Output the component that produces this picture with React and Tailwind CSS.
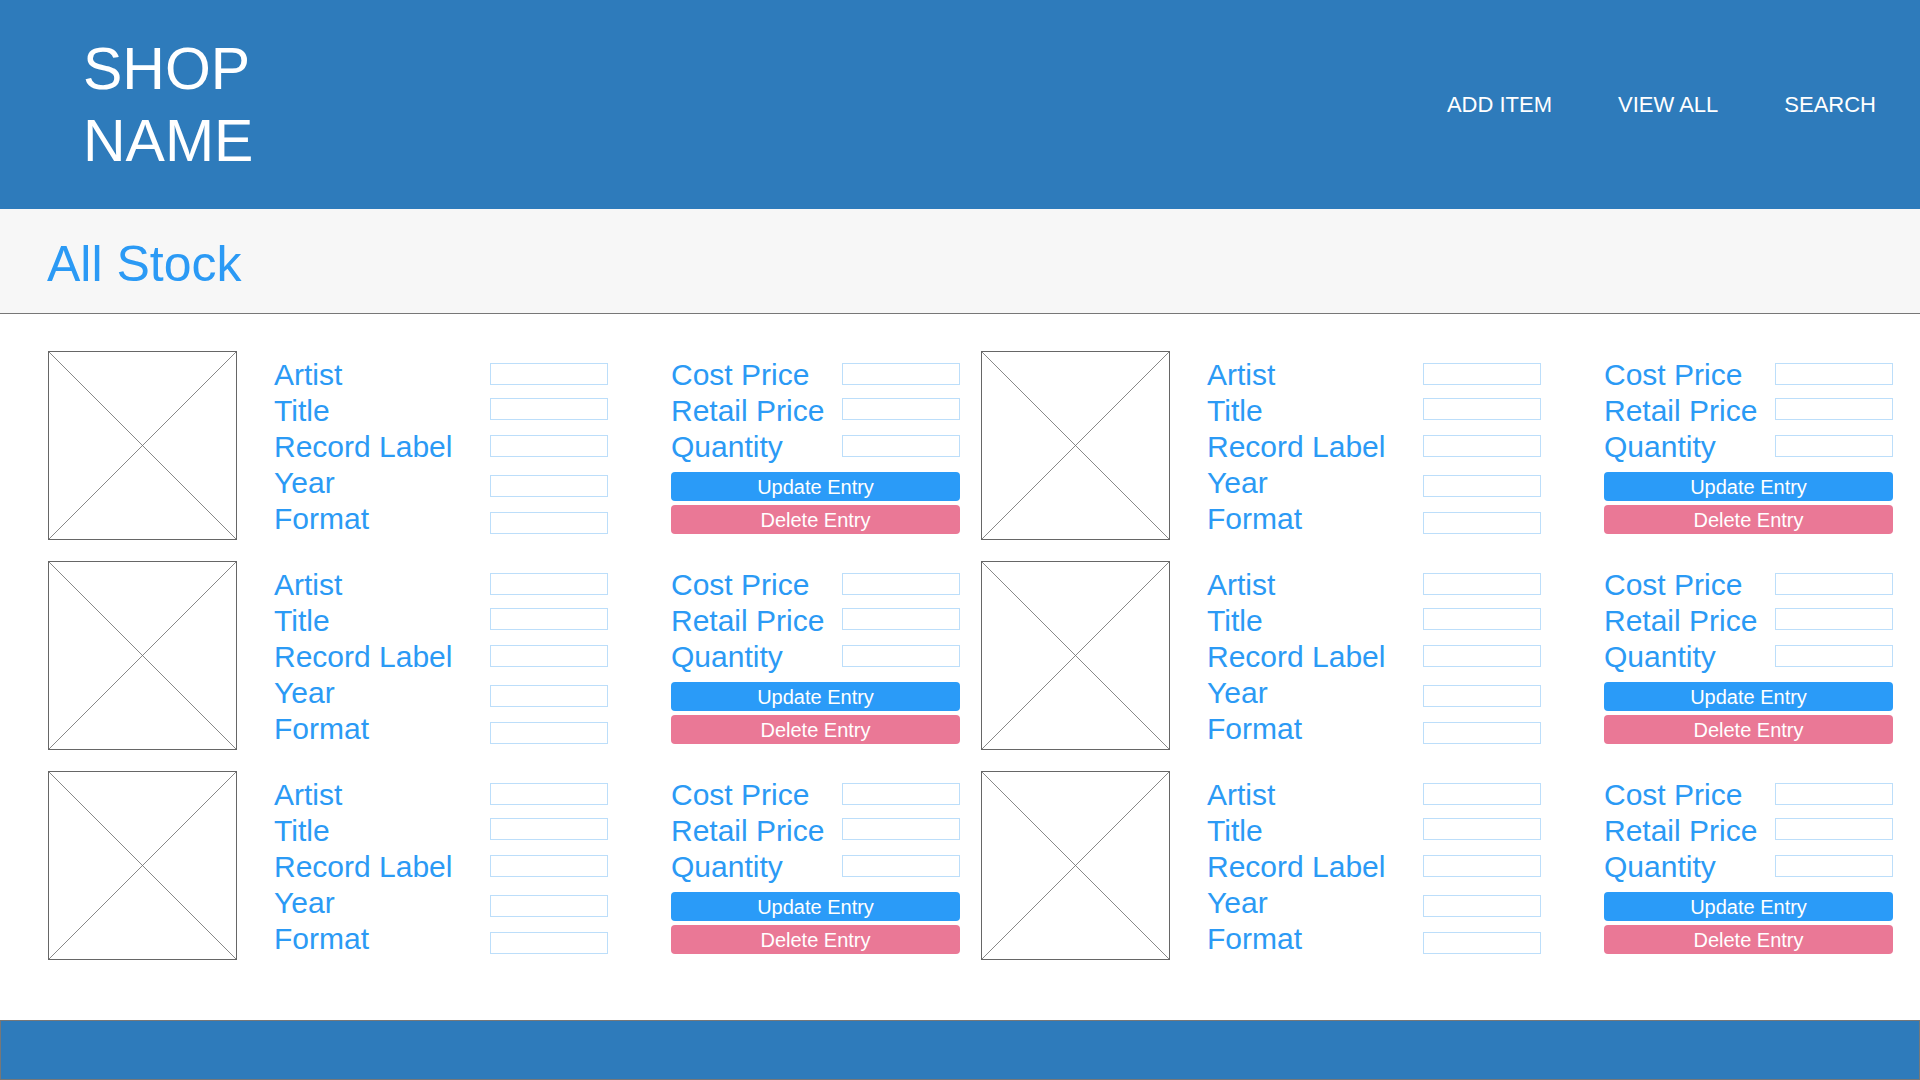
const FONT = { fontFamily: '"Liberation Sans", Arial, sans-serif' }

const LEFT_FIELDS = ['Artist', 'Title', 'Record Label', 'Year', 'Format']
const RIGHT_FIELDS = ['Cost Price', 'Retail Price', 'Quantity']

// input tops inside each card follow the mockup, which isn't perfectly regular
const LEFT_GAPS = ['mt-0', 'mt-[13px]', 'mt-[15px]', 'mt-[18px]', 'mt-[15px]']
const RIGHT_GAPS = ['mt-0', 'mt-[13px]', 'mt-[15px]']

function Placeholder() {
  return (
    <div className="w-[189px] h-[189px] shrink-0 border border-[#666666] bg-white">
      <svg width="100%" height="100%" viewBox="0 0 100 100" preserveAspectRatio="none" className="block">
        <line x1="0" y1="0" x2="100" y2="100" stroke="#6a6a6a" strokeWidth="0.8" vectorEffect="non-scaling-stroke" />
        <line x1="100" y1="0" x2="0" y2="100" stroke="#6a6a6a" strokeWidth="0.8" vectorEffect="non-scaling-stroke" />
      </svg>
    </div>
  )
}

function Inputs({ gaps }) {
  return (
    <div className="w-[118px] pt-[12px] flex flex-col">
      {gaps.map((g, i) => (
        <input
          key={i}
          type="text"
          className={`${g} h-[22px] w-[118px] border border-[#bcdefa] bg-white outline-none`}
        />
      ))}
    </div>
  )
}

function Labels({ items, width }) {
  return (
    <div className={`${width} pt-[6px] text-[30px] leading-[36px] text-[#2b9af5] whitespace-nowrap`}>
      {items.map(l => <div key={l}>{l}</div>)}
    </div>
  )
}

function StockCard() {
  return (
    <div className="flex w-[912px] h-[189px]">
      <Placeholder />

      {/* ── Datos del disco ───────────────────────── */}
      <div className="ml-[37px] flex">
        <Labels items={LEFT_FIELDS} width="w-[216px]" />
        <Inputs gaps={LEFT_GAPS} />
      </div>

      {/* ── Precio / stock + acciones ─────────────── */}
      <div className="ml-[63px] w-[289px] flex flex-col">
        <div className="flex justify-between h-[113px]">
          <Labels items={RIGHT_FIELDS} width="w-[170px]" />
          <Inputs gaps={RIGHT_GAPS} />
        </div>
        <button
          type="button"
          className="mt-[8px] h-[29px] w-full rounded-[4px] bg-[#2a9bf8] text-white text-[20px] leading-[31px]"
        >
          Update Entry
        </button>
        <button
          type="button"
          className="mt-[4px] h-[29px] w-full rounded-[4px] bg-[#ea7896] text-white text-[20px] leading-[30px]"
        >
          Delete Entry
        </button>
      </div>
    </div>
  )
}

export default function App() {
  const cards = [0, 1, 2, 3, 4, 5]

  return (
    <div className="w-[1920px] h-[1080px] bg-white flex flex-col overflow-hidden" style={FONT}>
      <header className="h-[209px] bg-[#2e7bbb] flex justify-between">
        <div className="pl-[83px] pt-[33px] text-white text-[59px] leading-[72px]">
          <div>SHOP</div>
          <div>NAME</div>
        </div>
        <nav className="self-center flex gap-[66px] pr-[44px] text-white text-[22px]">
          <a href="#">ADD ITEM</a>
          <a href="#">VIEW ALL</a>
          <a href="#">SEARCH</a>
        </nav>
      </header>

      <div className="h-[105px] bg-[#f7f7f7] border-b border-[#777777] pl-[47px] pt-[30px]">
        <h1 className="text-[50px] leading-[50px] text-[#2b9af5]">All Stock</h1>
      </div>

      <main className="flex-1 pl-[48px] pt-[37px]">
        <div className="grid grid-cols-[912px_912px] gap-x-[21px] gap-y-[21px]">
          {cards.map(i => <StockCard key={i} />)}
        </div>
      </main>

      <footer className="h-[60px] bg-[#2e7bbb] border border-[#777777]" />
    </div>
  )
}
